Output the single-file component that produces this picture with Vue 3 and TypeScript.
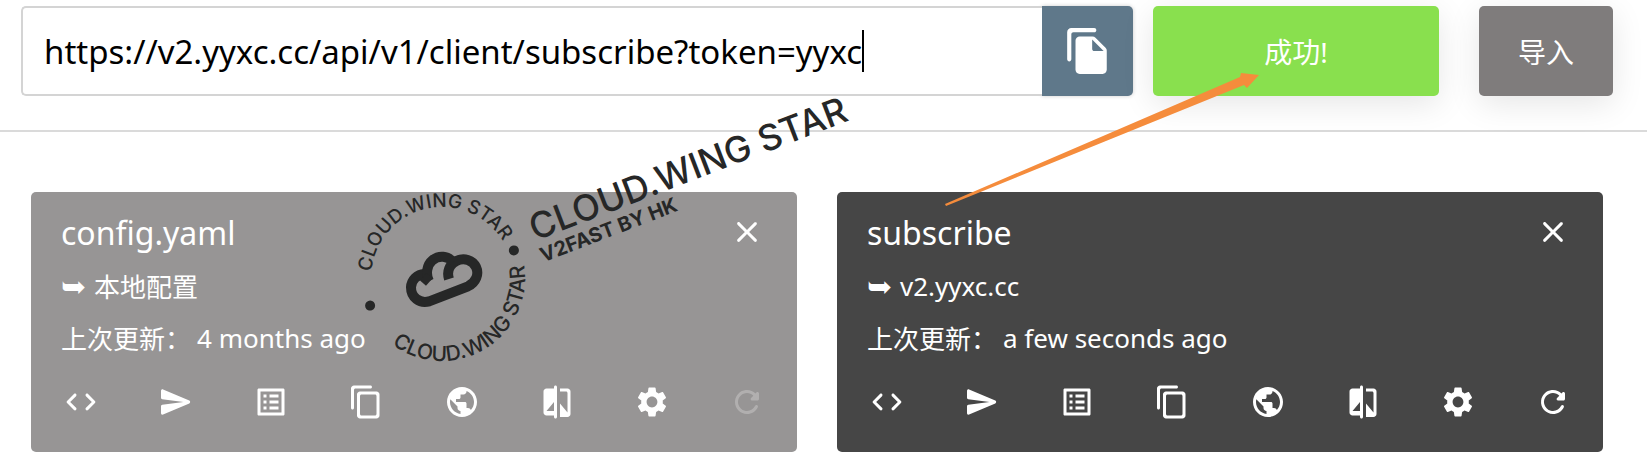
<script setup lang="ts">
import { ref } from 'vue'

interface Action {
  label: string
  path: string
}

interface Profile {
  name: string
  source: string
  updated: string
  active: boolean
  remote: boolean
}

const url = ref('https://v2.yyxc.cc/api/v1/client/subscribe?token=yyxc')

const profiles: Profile[] = [
  { name: 'config.yaml', source: '本地配置', updated: '4 months ago', active: false, remote: false },
  { name: 'subscribe', source: 'v2.yyxc.cc', updated: 'a few seconds ago', active: true, remote: true },
]

const filePath =
  'M15 1H4c-1.1 0-2 .9-2 2v13c0 .55.45 1 1 1s1-.45 1-1V4c0-.55.45-1 1-1h10c.55 0 1-.45 1-1s-.45-1-1-1zm.59 4.59l4.83 4.83c.37.37.58.88.58 1.41V21c0 1.1-.9 2-2 2H7.99C6.89 23 6 22.1 6 21l.01-14c0-1.1.89-2 1.99-2h6.17c.53 0 1.04.21 1.42.59zM15 12h4.5L14 6.5V11c0 .55.45 1 1 1z'
const closePath =
  'M18.3 5.71c-.39-.39-1.02-.39-1.41 0L12 10.59 7.11 5.7c-.39-.39-1.02-.39-1.41 0-.39.39-.39 1.02 0 1.41L10.59 12 5.7 16.89c-.39.39-.39 1.02 0 1.41.39.39 1.02.39 1.41 0L12 13.41l4.89 4.89c.39.39 1.02.39 1.41 0 .39-.39.39-1.02 0-1.41L13.41 12l4.89-4.89c.38-.38.38-1.02 0-1.4z'

const actions: Action[] = [
  {
    label: 'Edit code',
    path: 'M8.7 15.9L4.8 12l3.9-3.9c.39-.39.39-1.01 0-1.4-.39-.39-1.01-.39-1.4 0l-4.59 4.59c-.39.39-.39 1.02 0 1.41l4.59 4.6c.39.39 1.01.39 1.4 0 .39-.39.39-1.01 0-1.4zm6.6 0l3.9-3.9-3.9-3.9c-.39-.39-.39-1.01 0-1.4.39-.39 1.01-.39 1.4 0l4.59 4.59c.39.39.39 1.02 0 1.41l-4.59 4.6c-.39.39-1.01.39-1.4 0-.39-.39-.39-1.01 0-1.4z',
  },
  {
    label: 'Send',
    path: 'M3.4 20.4l17.45-7.48c.81-.35.81-1.49 0-1.84L3.4 3.6c-.66-.29-1.39.2-1.39.91L2 9.12c0 .5.37.93.87.99L17 12 2.87 13.88c-.5.07-.87.5-.87 1l.01 4.61c0 .71.73 1.2 1.39.91z',
  },
  {
    label: 'Rules',
    path: 'M19 5v14H5V5h14m1.1-2H3.9c-.5 0-.9.4-.9.9v16.2c0 .4.4.9.9.9h16.2c.4 0 .9-.5.9-.9V3.9c0-.5-.5-.9-.9-.9zM11 7h6v2h-6V7zm0 4h6v2h-6v-2zm0 4h6v2h-6zM7 7h2v2H7zm0 4h2v2H7zm0 4h2v2H7z',
  },
  {
    label: 'Duplicate',
    path: 'M15 1H4c-1.1 0-2 .9-2 2v13c0 .55.45 1 1 1s1-.45 1-1V4c0-.55.45-1 1-1h10c.55 0 1-.45 1-1s-.45-1-1-1zm4 4H8c-1.1 0-2 .9-2 2v14c0 1.1.9 2 2 2h11c1.1 0 2-.9 2-2V7c0-1.1-.9-2-2-2zm-1 16H9c-.55 0-1-.45-1-1V8c0-.55.45-1 1-1h9c.55 0 1 .45 1 1v12c0 .55-.45 1-1 1z',
  },
  {
    label: 'Open in browser',
    path: 'M12 2C6.48 2 2 6.48 2 12s4.48 10 10 10 10-4.48 10-10S17.52 2 12 2zm-1 17.93c-3.95-.49-7-3.85-7-7.93 0-.62.08-1.21.21-1.79L9 15v1c0 1.1.9 2 2 2v1.93zm6.9-2.54c-.26-.81-1-1.39-1.9-1.39h-1v-3c0-.55-.45-1-1-1H8v-2h2c.55 0 1-.45 1-1V7h2c1.1 0 2-.9 2-2v-.41c2.93 1.19 5 4.06 5 7.41 0 2.08-.8 3.97-2.1 5.39z',
  },
  {
    label: 'Compare',
    path: 'M10 3H5c-1.1 0-2 .9-2 2v14c0 1.1.9 2 2 2h5v1c0 .55.45 1 1 1s1-.45 1-1V2c0-.55-.45-1-1-1s-1 .45-1 1v1zm0 15H5l5-6v6zm9-15h-5v2h4c.55 0 1 .45 1 1v13l-5-6v9h5c1.1 0 2-.9 2-2V5c0-1.1-.9-2-2-2z',
  },
  {
    label: 'Settings',
    path: 'M19.14 12.94c.04-.3.06-.61.06-.94 0-.32-.02-.64-.07-.94l2.03-1.58c.18-.14.23-.41.12-.61l-1.92-3.32c-.12-.22-.37-.29-.59-.22l-2.39.96c-.5-.38-1.03-.7-1.62-.94l-.36-2.54c-.04-.24-.24-.41-.48-.41h-3.84c-.24 0-.43.17-.47.41l-.36 2.54c-.59.24-1.13.57-1.62.94l-2.39-.96c-.22-.08-.47 0-.59.22L2.74 8.87c-.12.21-.08.47.12.61l2.03 1.58c-.05.3-.09.63-.09.94s.02.64.07.94l-2.03 1.58c-.18.14-.23.41-.12.61l1.92 3.32c.12.22.37.29.59.22l2.39-.96c.5.38 1.03.7 1.62.94l.36 2.54c.05.24.24.41.48.41h3.84c.24 0 .44-.17.47-.41l.36-2.54c.59-.24 1.13-.56 1.62-.94l2.39.96c.22.08.47 0 .59-.22l1.92-3.32c.12-.22.07-.47-.12-.61l-2.01-1.58zM12 15.6c-1.98 0-3.6-1.62-3.6-3.6s1.62-3.6 3.6-3.6 3.6 1.62 3.6 3.6-1.62 3.6-3.6 3.6z',
  },
]
const refreshPath =
  'M17.65 6.35c-1.63-1.63-3.94-2.57-6.48-2.31-3.67.37-6.69 3.35-7.1 7.02C3.52 15.91 7.27 20 12 20c3.19 0 5.93-1.87 7.21-4.56.32-.67-.16-1.44-.9-1.44-.37 0-.72.2-.88.53-1.13 2.43-3.84 3.97-6.8 3.31-2.22-.49-4.01-2.3-4.48-4.52C5.31 9.44 8.26 6 12 6c1.66 0 3.14.69 4.22 1.78l-1.51 1.51c-.63.63-.19 1.71.7 1.71H19c.55 0 1-.45 1-1V6.41c0-.89-1.08-1.34-1.71-.71l-.64.65z'
</script>

<template>
  <div class="page">
    <header class="bar">
      <div class="field">
        <div class="entry">
          <input v-model="url" type="text" aria-label="URL" spellcheck="false" />
          <div class="caret-line" aria-hidden="true">
            <span class="ghost">{{ url }}</span><i class="caret"></i>
          </div>
        </div>
        <button class="paste" type="button" aria-label="Paste">
          <svg viewBox="0 0 24 24"><path :d="filePath" /></svg>
        </button>
      </div>
      <button class="btn success" type="button">成功!</button>
      <button class="btn import" type="button">导入</button>
    </header>

    <main class="cards">
      <article v-for="p in profiles" :key="p.name" class="card" :class="{ active: p.active }">
        <div class="head">
          <h2>{{ p.name }}</h2>
          <button class="icon" type="button" aria-label="Delete">
            <svg viewBox="0 0 24 24"><path :d="closePath" /></svg>
          </button>
        </div>
        <p><span class="hook">➥</span>{{ p.source }}</p>
        <p class="time"><span>上次更新：</span><span>{{ p.updated }}</span></p>
        <div class="actions">
          <button v-for="a in actions" :key="a.label" class="icon" type="button" :aria-label="a.label">
            <svg viewBox="0 0 24 24"><path :d="a.path" /></svg>
          </button>
          <button class="icon" type="button" aria-label="Refresh" :disabled="!p.remote">
            <svg viewBox="0 0 24 24"><path :d="refreshPath" /></svg>
          </button>
        </div>
      </article>
    </main>

    <svg class="mark" viewBox="320 50 580 340" role="img" aria-label="Cloud.Wing Star">
      <defs>
        <path id="ring-top" d="M371 278A71 71 0 1 1 513 278" />
        <path id="ring-bottom" d="M359 278A83 83 0 0 0 525 278" />
      </defs>
      <g transform="rotate(-21 442 278)">
        <circle cx="365" cy="278" r="5" />
        <circle cx="519" cy="278" r="5" />
      </g>
      <g transform="rotate(-13 442 278)">
        <text class="ring" text-anchor="middle"><textPath href="#ring-top" startOffset="50%">CLOUD.WING STAR</textPath></text>
      </g>
      <g transform="rotate(-31 442 278)">
        <text class="ring lower" text-anchor="middle"><textPath href="#ring-bottom" startOffset="50%">CLOUD.WING STAR</textPath></text>
      </g>
      <g class="cloud" transform="translate(340 170) scale(0.3333)">
        <path d="M253 312A42 42 0 0 0 213 352C213 382 238 402 268 394L384 349C408 338 418 312 408 291C398 270 372 262 349 273C328 284 320 305 327 327" />
        <path d="M267 334C256 312 261 284 277 271C297 255 323 257 340 277" />
        <path d="M250 320L268 336" />
      </g>
      <g transform="translate(535 241) rotate(-21)">
        <text class="big">CLOUD.WING STAR</text>
        <text class="small" y="23">V2FAST BY HK</text>
      </g>
    </svg>

    <svg class="arrow" viewBox="940 60 330 150" aria-hidden="true">
      <path d="M945 204L1240 77L1241 73L1259 75L1247 88L1244 85L946 206Z" />
    </svg>
  </div>
</template>

<style>
body {
  margin: 0;
  background: #fff;
}
</style>

<style scoped>
.page {
  position: relative;
  font-family: 'Noto Sans', 'Noto Sans CJK SC', sans-serif;
}
.bar {
  display: flex;
  padding: 6px 34px 34px 21px;
  border-bottom: 2px solid #dadada;
}
button {
  border: 0;
  padding: 0;
  margin: 0;
  font-family: inherit;
  color: #fff;
  cursor: pointer;
}
svg {
  display: block;
  fill: currentColor;
}
.field {
  flex: 1;
  display: flex;
  height: 90px;
  margin-right: 20px;
}
.entry {
  position: relative;
  flex: 1;
}
input {
  box-sizing: border-box;
  width: 100%;
  height: 100%;
  padding: 0 21px;
  border: 2px solid #d4d4d4;
  border-right: 0;
  border-radius: 5px 0 0 5px;
  outline: 0;
  background: #fff;
  color: #000;
  font: 33px 'Noto Sans', sans-serif;
}
.caret-line {
  position: absolute;
  inset: 0 23px;
  display: flex;
  align-items: center;
  font-size: 33px;
  pointer-events: none;
}
.ghost {
  visibility: hidden;
}
.caret {
  width: 2px;
  height: 42px;
  background: #000;
}
.paste {
  width: 91px;
  display: grid;
  place-items: center;
  background: #5f788a;
  border-radius: 0 5px 5px 0;
  box-shadow: 0 0 4px rgba(0, 0, 0, 0.2);
}
.paste svg {
  width: 50px;
  height: 50px;
}
.btn {
  border-radius: 5px;
  font-size: 28px;
  box-shadow: 0 8px 32px rgba(0, 0, 0, 0.1);
}
.success {
  width: 286px;
  margin-right: 40px;
  background: #89e04e;
}
.import {
  width: 134px;
  background: #7f7c7c;
}
.cards {
  display: grid;
  grid-template-columns: 1fr 1fr;
  gap: 40px;
  padding: 60px 44px 3px 31px;
}
.card {
  padding: 20px 30px 30px;
  border-radius: 5px;
  background: #979595;
  color: #fff;
}
.active {
  background: #464646;
}
.head {
  display: flex;
  justify-content: space-between;
  align-items: center;
  height: 40px;
}
h2 {
  margin: 0;
  font-size: 32px;
  font-weight: 400;
}
p {
  display: flex;
  align-items: center;
  height: 36px;
  margin: 16px 0 0;
  font-size: 26px;
  white-space: nowrap;
}
.hook {
  width: 33px;
  font-family: 'DejaVu Sans', sans-serif;
  font-size: 30px;
}
.time {
  gap: 6px;
}
.actions {
  display: flex;
  justify-content: space-between;
  margin-top: 26px;
}
.icon {
  width: 40px;
  height: 40px;
  display: grid;
  place-items: center;
  background: none;
}
.icon svg {
  width: 36px;
  height: 36px;
}
.icon:disabled {
  opacity: 0.25;
}
.mark,
.arrow {
  position: absolute;
  pointer-events: none;
}
.mark {
  left: 320px;
  top: 50px;
  width: 580px;
  height: 340px;
  color: #262727;
  font-family: Inter, Lato, sans-serif;
}
.ring {
  font-size: 19px;
  font-weight: 500;
}
.lower {
  font-size: 21px;
}
.big {
  font-size: 36px;
  font-weight: 500;
}
.small {
  font-size: 20px;
  font-weight: 700;
}
.cloud {
  fill: none;
  stroke: currentColor;
  stroke-width: 30;
}
.arrow {
  left: 940px;
  top: 60px;
  width: 330px;
  height: 150px;
  color: #f58c3c;
}
</style>
